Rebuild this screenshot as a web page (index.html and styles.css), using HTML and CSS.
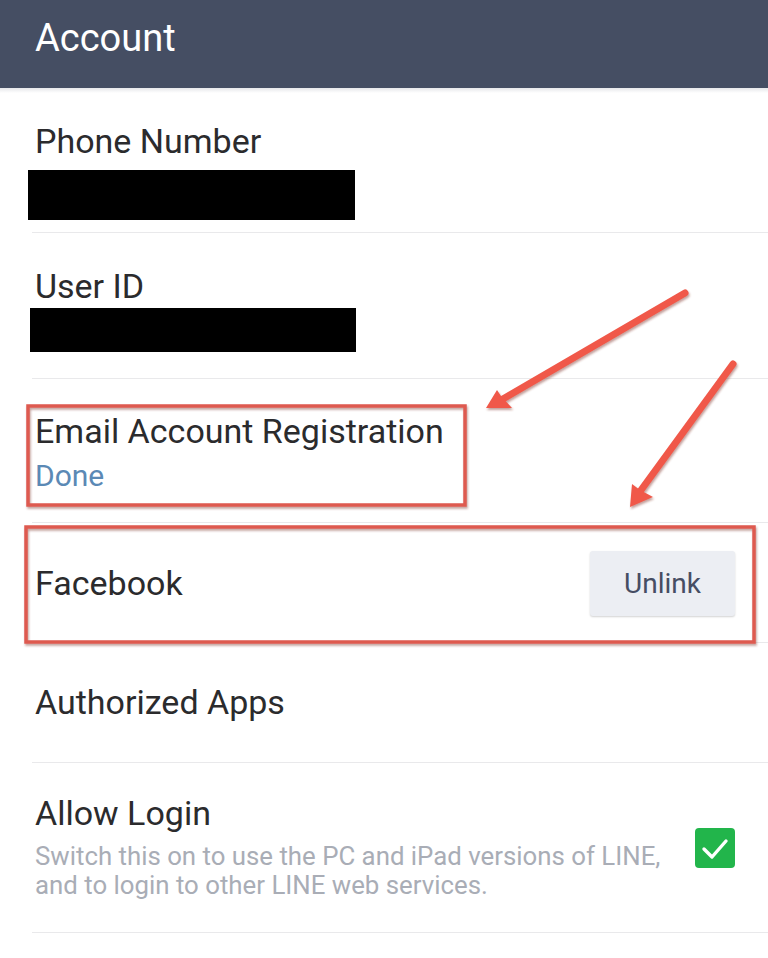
FILE: index.html
```html
<!DOCTYPE html>
<html lang="en">
<head>
<meta charset="utf-8">
<title>Account</title>
<link rel="stylesheet" href="styles.css">
</head>
<body>
<div class="page">
  <header class="topbar"><h1 class="topbar-title">Account</h1></header>
  <div class="topbar-shadow"></div>
  <main class="list">
    <section class="row row-phone">
      <div class="row-title">Phone Number</div>
      <div class="redact redact-phone"></div>
    </section>
    <section class="row row-user">
      <div class="row-title">User ID</div>
      <div class="redact redact-user"></div>
    </section>
    <section class="row row-email">
      <div class="row-title">Email Account Registration</div>
      <div class="row-status">Done</div>
    </section>
    <section class="row row-facebook">
      <div class="row-title">Facebook</div>
      <button class="btn-unlink" type="button">Unlink</button>
    </section>
    <section class="row row-apps">
      <div class="row-title">Authorized Apps</div>
    </section>
    <section class="row row-login">
      <div class="login-text">
        <div class="row-title">Allow Login</div>
        <div class="row-desc">Switch this on to use the PC and iPad versions of LINE,<br>and to login to other LINE web services.</div>
      </div>
      <div class="checkbox">
        <svg viewBox="0 0 40 40" width="40" height="40" aria-hidden="true">
          <path d="M9 21 L17 29 L31 13" fill="none" stroke="#ffffff" stroke-width="3.4" stroke-linecap="round" stroke-linejoin="round"/>
        </svg>
      </div>
    </section>
  </main>

  <svg class="annotations" viewBox="0 0 768 958" width="768" height="958" aria-hidden="true">
    <defs>
      <filter id="sh" x="-10%" y="-10%" width="120%" height="120%">
        <feDropShadow dx="1" dy="2" stdDeviation="1.2" flood-color="#7a2a22" flood-opacity="0.45"/>
      </filter>
    </defs>
    <g filter="url(#sh)">
      <rect x="28" y="406" width="437" height="99" fill="none" stroke="#de5a50" stroke-width="3.5"/>
      <rect x="26" y="527" width="728" height="115" fill="none" stroke="#de5a50" stroke-width="3.5"/>
      <line x1="685" y1="293" x2="496" y2="403" stroke="#f0594a" stroke-width="7" stroke-linecap="round"/>
      <path d="M486 408 L497 390 L501 396 L512 408 Z" fill="#f0594a"/>
      <line x1="733" y1="364" x2="636" y2="497" stroke="#f0594a" stroke-width="7" stroke-linecap="round"/>
      <path d="M630 507 L632 484 L640 490 L653 497 Z" fill="#f0594a"/>
    </g>
  </svg>
</div>
</body>
</html>
```
FILE: styles.css
```css
* { box-sizing: border-box; }
html, body { margin: 0; padding: 0; background: #ffffff; }
body { font-family: Roboto, "Liberation Sans", Arial, sans-serif; color: #2b2b2d; }
.page { position: relative; width: 768px; height: 958px; overflow: hidden; }

.topbar {
  height: 88px;
  background: #454e63;
  padding: 14px 0 0 35px;
}
.topbar-title {
  margin: 0;
  font-weight: 400;
  font-size: 38px;
  line-height: 48px;
  color: #ffffff;
}
.topbar-shadow {
  height: 5px;
  margin-bottom: -5px;
  background: linear-gradient(#e6e7ea, rgba(255,255,255,0));
  position: relative;
  z-index: 1;
}

.list { display: flex; flex-direction: column; }
.row {
  margin-left: 32px;
  padding-left: 3px;
  border-bottom: 1px solid #e9e9eb;
}
.row-title {
  font-size: 34px;
  line-height: 40px;
  color: #2b2b2d;
}

.row-phone { height: 145px; padding-top: 33px; }
.row-user { height: 146px; padding-top: 33px; }
.redact { background: #000000; }
.redact-phone { width: 327px; height: 50px; margin: 9px 0 0 -7px; }
.redact-user { width: 326px; height: 44px; margin: 2px 0 0 -5px; }

.row-email { height: 144px; padding-top: 32px; }
.row-status { font-size: 30px; line-height: 36px; margin-top: 7px; color: #5b89b5; }

.row-facebook {
  height: 120px;
  display: flex;
  align-items: center;
  justify-content: space-between;
  padding-right: 33px;
}
.btn-unlink {
  width: 145px;
  height: 65px;
  margin-top: 2px;
  border: none;
  border-radius: 3px;
  background: #eceef3;
  box-shadow: 0 1px 2px rgba(0,0,0,0.18);
  font-family: Roboto, "Liberation Sans", Arial, sans-serif;
  font-size: 28px;
  color: #464d63;
  padding: 0;
}

.row-apps { height: 120px; display: flex; align-items: center; padding-bottom: 2px; }

.row-login {
  height: 170px;
  display: flex;
  align-items: flex-start;
  justify-content: space-between;
  padding-top: 30px;
  padding-right: 33px;
}
.row-desc {
  font-size: 25.8px;
  line-height: 29px;
  color: #a9adb6;
  margin-top: 9px;
}
.checkbox {
  width: 40px;
  height: 40px;
  margin-top: 35px;
  border-radius: 4px;
  background: #22b54b;
}
.checkbox svg { display: block; }

.annotations { position: absolute; left: 0; top: 0; pointer-events: none; }
```
